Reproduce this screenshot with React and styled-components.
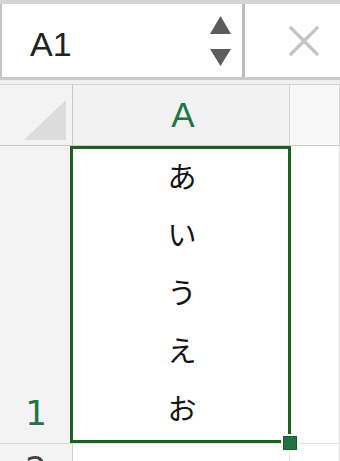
import React from 'react'
import styled, { createGlobalStyle } from 'styled-components'

const GlobalStyle = createGlobalStyle`
  body {
    margin: 0;
    background: #ffffff;
    overflow: hidden;
  }
`

const Frame = styled.div`
  width: 340px;
  height: 461px;
  overflow: hidden;
  display: flex;
  flex-direction: column;
  background: #ffffff;
  font-family: "Liberation Sans", Arial, sans-serif;
`

const FormulaBar = styled.div`
  display: flex;
  height: 73px;
  flex-shrink: 0;
  border-top: 4px solid #d6d6d6;
  border-bottom: 3px solid #c8c8c8;
  background: #ffffff;
`

const NameBox = styled.div`
  width: 240px;
  display: flex;
  align-items: center;
  justify-content: space-between;
  border-left: 2px solid #c4c4c4;
  border-right: 3px solid #bdbdbd;
  background: #ffffff;
`

const NameText = styled.span`
  font-size: 34px;
  color: #222222;
  padding-left: 28px;
  padding-top: 7px;
`

const Spinner = styled.svg`
  width: 21px;
  height: 50px;
  margin-right: 11px;
`

const FormulaArea = styled.div`
  flex: 1;
  display: flex;
  align-items: center;
  padding-left: 43px;
`

const Gap = styled.div`
  height: 4px;
  flex-shrink: 0;
  background: #f0f0f0;
  border-bottom: 1px solid #d2d2d2;
`

const Sheet = styled.div`
  flex: 1;
  display: grid;
  grid-template-columns: 73px 217px 1fr;
  grid-template-rows: 61px 298px 1fr;
`

const Corner = styled.div`
  display: flex;
  justify-content: flex-end;
  align-items: flex-end;
  padding: 0 6px 5px 0;
  background: #f3f3f3;
  border-right: 1px solid #c6c6c6;
  border-bottom: 1px solid #c6c6c6;
`

const ColHeader = styled.div`
  display: flex;
  align-items: center;
  justify-content: center;
  background: ${p => (p.$active ? '#f2f2f2' : '#f8f8f8')};
  border-right: 1px solid #d4d4d4;
  border-bottom: 1px solid #cccccc;
  color: #217346;
  font-family: "Liberation Sans Narrow", "Liberation Sans", sans-serif;
  font-size: 35px;
  padding-left: 4px;
`

const RowHeader = styled.div`
  display: flex;
  justify-content: center;
  align-items: ${p => (p.$bottom ? 'flex-end' : 'flex-start')};
  padding-bottom: ${p => (p.$bottom ? '13px' : '0')};
  background: #f3f3f3;
  border-right: 1px solid #d0d0d0;
  border-bottom: 1px solid #d6d6d6;
  color: ${p => (p.$active ? '#217346' : '#444444')};
  font-family: "DejaVu Sans", sans-serif;
  font-size: 34px;
  line-height: 34px;
  overflow: hidden;
`

const RowLabel = styled.span`
  margin-top: ${p => p.$top || 0}px;
`

const Cell = styled.div`
  position: relative;
  z-index: ${p => (p.$active ? 2 : 0)};
  background: #ffffff;
  border-right: 1px solid #e1e1e1;
  border-bottom: 1px solid #e1e1e1;
`

const VerticalText = styled.div`
  display: flex;
  flex-direction: column;
  align-items: center;
  padding-left: 2px;
  font-family: "Noto Sans CJK JP", sans-serif;
  font-size: 29px;
  line-height: 58px;
  color: #141414;
`

const Selection = styled.div`
  position: absolute;
  top: 0;
  left: -3px;
  right: -2px;
  bottom: 0;
  border: 3px solid #1d5f22;
  pointer-events: none;
`

const FillHandle = styled.div`
  position: absolute;
  right: -7px;
  bottom: -6px;
  width: 12px;
  height: 12px;
  background: #217346;
  box-shadow: 0 0 0 1px #1d5f22, 0 0 0 3px #ffffff;
`

const kana = ['あ', 'い', 'う', 'え', 'お']

export default function App() {
  return (
    <Frame>
      <GlobalStyle />
      <FormulaBar>
        <NameBox>
          <NameText>A1</NameText>
          <Spinner viewBox="0 0 21 50">
            <polygon points="10.5,0 21,18 0,18" fill="#5c5c5c" />
            <polygon points="0,33 21,33 10.5,50" fill="#5c5c5c" />
          </Spinner>
        </NameBox>
        <FormulaArea>
          <svg width="32" height="32" viewBox="0 0 32 32">
            <path d="M2 2 L30 30 M30 2 L2 30" stroke="#c4c4c4" strokeWidth="3.2" fill="none" />
          </svg>
        </FormulaArea>
      </FormulaBar>
      <Gap />
      <Sheet>
        <Corner>
          <svg width="42" height="40" viewBox="0 0 42 40">
            <polygon points="0,40 42,40 42,0" fill="#dcdcdc" />
          </svg>
        </Corner>
        <ColHeader $active>A</ColHeader>
        <ColHeader />
        <RowHeader $active $bottom>
          <RowLabel>1</RowLabel>
        </RowHeader>
        <Cell $active>
          <VerticalText>
            {kana.map(k => (
              <span key={k}>{k}</span>
            ))}
          </VerticalText>
          <Selection />
          <FillHandle />
        </Cell>
        <Cell />
        <RowHeader>
          <RowLabel $top={8}>2</RowLabel>
        </RowHeader>
        <Cell />
        <Cell />
      </Sheet>
    </Frame>
  )
}
